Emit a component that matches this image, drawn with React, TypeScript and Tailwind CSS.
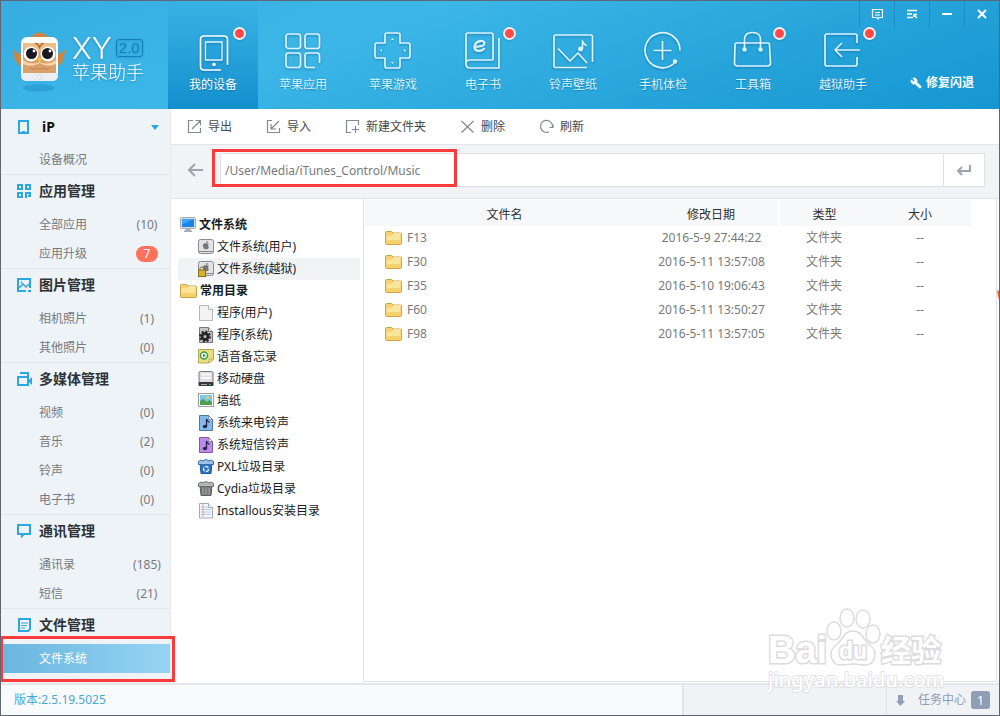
import React from "react";
import { Wrench } from "lucide-react";

type IconProps = { children: React.ReactNode };

function NavSvg({ children }: IconProps) {
  return (
    <svg viewBox="0 0 42 42" className="h-[42px] w-[42px] drop-shadow-[0_1px_1px_rgba(0,70,120,0.45)]" fill="none" stroke="#dcf4ff" strokeWidth="1.7" strokeLinecap="butt" strokeLinejoin="round" aria-hidden="true">
      {children}
    </svg>
  );
}

const navItems = [
  {
    label: "我的设备",
    active: true,
    dot: true,
    icon: (
      <NavSvg>
        <path d="M29 40H12q-3.500 0-3.500-3.500V9.500Q8.500 6 12 6h20q3.500 0 3.500 3.500V35" stroke="#fff" />
        <rect x="13.500" y="12" width="16.500" height="18" stroke="#e4f6ff" strokeWidth="1.300" />
        <circle cx="22" cy="34.500" r="1.800" fill="#fff" stroke="none" />
      </NavSvg>
    ),
  },
  {
    label: "苹果应用",
    icon: (
      <NavSvg>
        <rect x="4" y="4" width="14.500" height="14.500" rx="2.500" />
        <rect x="23" y="4" width="14.500" height="14.500" rx="2.500" />
        <rect x="4" y="23" width="14.500" height="14.500" rx="2.500" />
        <path d="M33 37.500h-7.500q-2.500 0-2.500-2.500v-9.500q0-2.500 2.500-2.500H35q2.500 0 2.500 2.500V33" />
      </NavSvg>
    ),
  },
  {
    label: "苹果游戏",
    icon: (
      <NavSvg>
        <path d="M15 3h11q2 0 2 2v8h8q2 0 2 2v11q0 2-2 2h-8v8q0 2-2 2H15q-2 0-2-2v-8H5q-2 0-2-2V15q0-2 2-2h8V5q0-2 2-2Z" />
        <path d="m20.500 8 1.500 2h-3ZM20.500 34l1.500-2h-3ZM8 20.500l2-1.500v3ZM34 20.500 32 19v3Z" fill="#dcf4ff" stroke="none" />
      </NavSvg>
    ),
  },
  {
    label: "电子书",
    dot: true,
    icon: (
      <NavSvg>
        <path d="M31 30V5q0-2-2-2H6Q4 3 4 5v29q0 4 4 4h29V8M4 34q0-4 4-4h23" />
        <path d="M12.500 17q10-.5 10-3.500c0-4.500-9-3-10 3-.5 5 7 6 10 1.500" strokeWidth="2.200" />
      </NavSvg>
    ),
  },
  {
    label: "铃声壁纸",
    icon: (
      <NavSvg>
        <path d="M35 37.500H3.500q-1.500 0-1.500-1.500V7q0-2 2-2h35q1.500 0 1.500 2v25" />
        <path d="m6 18.500 12 12.500 8-8 9 10" />
        <circle cx="28.500" cy="19" r="2.500" fill="#dcf4ff" stroke="none" />
        <path d="M30.500 19v-8q1 3 4 5" />
      </NavSvg>
    ),
  },
  {
    label: "手机体检",
    icon: (
      <NavSvg>
        <path d="M38 20.500A17.500 17.500 0 1 0 33 32.500" />
        <path d="M20.500 11v19M11.500 20.500h18" />
        <circle cx="33" cy="31.500" r="2.200" fill="#dcf4ff" stroke="none" />
      </NavSvg>
    ),
  },
  {
    label: "工具箱",
    dot: true,
    icon: (
      <NavSvg>
        <path d="M5 13h31q1.500 0 1.500 2l1 18q0 3-3 3h-30q-3 0-3-3l.5-18q0-2 2-2Z" />
        <path d="M12.500 19v-9.500q0-7 8-7t8 7V19" />
        <circle cx="12.500" cy="19.500" r="2.200" fill="#dcf4ff" stroke="none" />
        <circle cx="28.500" cy="19.500" r="2.200" fill="#dcf4ff" stroke="none" />
      </NavSvg>
    ),
  },
  {
    label: "越狱助手",
    dot: true,
    icon: (
      <NavSvg>
        <path d="M35 13V5.500Q35 4 33 4H5Q3 4 3 6v28q0 2 2 2h28q2 0 2-2v-7" />
        <path d="M38 20H13M20 13l-7 7 7 7" />
      </NavSvg>
    ),
  },
];

function SideIcon({ children }: IconProps) {
  return (
    <svg viewBox="0 0 16 16" className="h-4 w-4 shrink-0" fill="none" stroke="#2ba6de" strokeWidth="2" aria-hidden="true">
      {children}
    </svg>
  );
}

type SideItem = { label: string; count?: string; badge?: boolean; active?: boolean };

const sections: { title: string; icon: React.ReactNode; items: SideItem[] }[] = [
  {
    title: "应用管理",
    icon: (
      <SideIcon>
        <path d="M2 2h4v4H2ZM10 2h4v4h-4ZM2 10h4v4H2ZM10 15v-5h4v3h-2" />
      </SideIcon>
    ),
    items: [{ label: "全部应用", count: "(10)" }, { label: "应用升级", count: "7", badge: true }],
  },
  {
    title: "图片管理",
    icon: (
      <SideIcon>
        <path d="M10 14H2V2h12v9M12 14h3" />
        <path d="m3 11 4-4 3 3 3-3" strokeWidth="1.500" />
        <circle cx="5.500" cy="5.500" r="1" fill="#2ba6de" stroke="none" />
      </SideIcon>
    ),
    items: [{ label: "相机照片", count: "(1)" }, { label: "其他照片", count: "(0)" }],
  },
  {
    title: "多媒体管理",
    icon: (
      <SideIcon>
        <path d="M2 6h10v8H2ZM4 2h8v4" />
        <path d="m12 10 4-4v8Z" fill="#2ba6de" stroke="none" />
      </SideIcon>
    ),
    items: [
      { label: "视频", count: "(0)" },
      { label: "音乐", count: "(2)" },
      { label: "铃声", count: "(0)" },
      { label: "电子书", count: "(0)" },
    ],
  },
  {
    title: "通讯管理",
    icon: (
      <SideIcon>
        <path d="M2 2h12v9H8l-2 2v-2H2Z" />
      </SideIcon>
    ),
    items: [{ label: "通讯录", count: "(185)" }, { label: "短信", count: "(21)" }],
  },
  {
    title: "文件管理",
    icon: (
      <SideIcon>
        <path d="M14 12V2H3v12h9Z" />
        <path d="M5 6h7M5 8.500h6M5 11h4" strokeWidth="1.200" />
      </SideIcon>
    ),
    items: [{ label: "文件系统", active: true }],
  },
];

function SideRow({ item }: { item: SideItem }) {
  return (
    <li className="relative">
      <button
        className={
          item.active
            ? "flex h-[29px] w-full items-center bg-gradient-to-r from-[#68b6df] to-[#97d4f3] pl-[38px] text-white"
            : "flex h-[29px] w-full items-center justify-between pl-[38px]"
        }
      >
        <span>{item.label}</span>
        {item.count && (
          <span className="flex w-[46px] justify-center">
            {item.badge ? (
              <span className="h-4 w-[22px] rounded-full bg-[#ff715c] leading-4 text-white">{item.count}</span>
            ) : (
              item.count
            )}
          </span>
        )}
      </button>
      {item.active && (
        <span className="pointer-events-none absolute -top-2 -right-[5px] -bottom-[9px] -left-px z-10 border-3 border-[#fb3a3b]" />
      )}
    </li>
  );
}

function ToolSvg({ children }: IconProps) {
  return (
    <svg viewBox="0 0 15 15" className="h-[15px] w-[15px]" fill="none" stroke="#85888e" strokeWidth="1.200" aria-hidden="true">
      {children}
    </svg>
  );
}

const tools = [
  { label: "导出", icon: <ToolSvg><path d="M6 1.500H1.500v12h12V9M5 10l8-8M8.500 1.500h5v5" /></ToolSvg> },
  { label: "导入", icon: <ToolSvg><path d="M6 1.500H1.500v12h12V9M13 2l-8 8M5 5v5h5" /></ToolSvg> },
  { label: "新建文件夹", icon: <ToolSvg><path d="M6 13.500H1.500v-12h12V6M10.500 7v7M7 10.500h7" /></ToolSvg> },
  { label: "删除", icon: <ToolSvg><path d="m1.500 2 12 11.500M13.500 2l-12 11.500" /></ToolSvg> },
  { label: "刷新", icon: <ToolSvg><path d="M10 12.800A6 6 0 1 1 13.500 7.500V9M10.500 8.500h3.500V5.500" /></ToolSvg> },
];

function TreeSvg({ children }: IconProps) {
  return (
    <svg viewBox="0 0 16 16" className="h-4 w-4 shrink-0" aria-hidden="true">
      {children}
    </svg>
  );
}

function Folder() {
  return (
    <svg viewBox="0 0 17 15" className="h-[15px] w-[17px] shrink-0" aria-hidden="true">
      <path d="M.5 12.500v-11q0-1 1-1h5l1.500 1.500h7.500q1 0 1 1v9.500q0 1-1 1h-14q-1 0-1-1Z" fill="#f6d26f" stroke="#cda24a" />
      <path d="M1.500 4.500h6L9 3h6.500v6h-14Z" fill="#fbe596" />
      <path d="M8 2.500h7.500v1H9Z" fill="#fff6cf" />
    </svg>
  );
}

const disk = (
  <>
    <rect x=".5" y=".5" width="15" height="14" rx="2" fill="#e3e2e6" stroke="#8a8a90" />
    <path d="M1 12.500h14" stroke="#88888c" />
    <path d="M8 4.500c-2-1-3.500.5-3 3 .5 2 1.500 3.500 3 2.500 1.500 1 2.500-.5 3-2-1.500-.8-1.300-2.300 0-3-1-1.200-2-.8-3-.5Zm0-.5q0-2 2-2 0 2-2 2Z" fill="#737378" />
  </>
);

const note = (fill: string, stroke: string) => (
  <TreeSvg>
    <path d="M1.500.5h9l4 4v11h-13Z" fill={fill} stroke={stroke} />
    <path d="M10.500.5v4h4Z" fill="#fff" stroke={stroke} strokeWidth=".7" />
    <path d="M8.500 11V4q.5 2 3 3.500" fill="none" stroke="#202a40" strokeWidth="1.300" />
    <ellipse cx="7" cy="11.500" rx="2.200" ry="1.700" fill="#202a40" />
  </TreeSvg>
);

type TreeNode = { label: string; root?: boolean; selected?: boolean; icon: React.ReactNode };

const tree: TreeNode[] = [
  {
    label: "文件系统",
    root: true,
    icon: (
      <TreeSvg>
        <rect x=".5" y=".5" width="15" height="11" rx="1" fill="#d6dade" stroke="#a5abb1" />
        <rect x="2" y="2" width="12" height="8" fill="#1786e8" />
        <path d="M2 2h12L2 7.500Z" fill="#3fa3f5" />
        <path d="M6 12h4l1 1.500h1V15H4v-1.500h1Z" fill="#a8adb3" />
      </TreeSvg>
    ),
  },
  { label: "文件系统(用户)", icon: <TreeSvg>{disk}</TreeSvg> },
  {
    label: "文件系统(越狱)",
    selected: true,
    icon: (
      <TreeSvg>
        {disk}
        <path d="M2 9V7.500q0-1.500 2-1.500t2 1.500V9" fill="none" stroke="#7c6a1d" />
        <rect x=".5" y="9" width="7" height="6.500" fill="#d5b22e" stroke="#826e19" />
      </TreeSvg>
    ),
  },
  { label: "常用目录", root: true, icon: <Folder /> },
  {
    label: "程序(用户)",
    icon: (
      <TreeSvg>
        <path d="M1.500.5h9l4 4v11h-13Z" fill="#f3f3f5" stroke="#b5b5ba" />
        <path d="M10.500.5v4h4" fill="#fff" stroke="#b5b5ba" />
      </TreeSvg>
    ),
  },
  {
    label: "程序(系统)",
    icon: (
      <TreeSvg>
        <path d="M1.500.5h9l4 4v11h-13Z" fill="#c6c6c9" stroke="#77777b" />
        <path d="M10.500.5v4h4" fill="#eee" stroke="#77777b" />
        <circle cx="7" cy="9.500" r="3" fill="none" stroke="#29292c" strokeWidth="3" />
        <circle cx="7" cy="9.500" r="5" fill="none" stroke="#29292c" strokeWidth="2" strokeDasharray="2 1.900" />
      </TreeSvg>
    ),
  },
  {
    label: "语音备忘录",
    icon: (
      <TreeSvg>
        <path d="M.5.5h15v9.500l-4.500 4H.5Z" fill="#e9df82" stroke="#b7a755" />
        <path d="M11 14v-4h4.500Z" fill="#fbf5b8" stroke="#b7a755" />
        <circle cx="6" cy="6.500" r="3.500" fill="#fff" stroke="#3f9f43" strokeWidth="1.500" />
        <path d="m5 4.500 3 2-3 2Z" fill="#3f9f43" />
      </TreeSvg>
    ),
  },
  {
    label: "移动硬盘",
    icon: (
      <TreeSvg>
        <rect x="1" y=".5" width="14" height="12" rx="1.500" fill="#dedee1" stroke="#77777b" />
        <path d="M3 3.500h10M3 7h10" stroke="#f8f8f8" strokeWidth="2" />
        <rect x=".5" y="11" width="15" height="4" rx="1" fill="#38383c" />
        <path d="M3 13.500h6" stroke="#aaa" />
        <path d="M11 13.500h2" stroke="#38c64b" />
      </TreeSvg>
    ),
  },
  {
    label: "墙纸",
    icon: (
      <TreeSvg>
        <rect x=".5" y=".5" width="15" height="13" fill="#fff" stroke="#9b9ea2" />
        <rect x="2" y="2" width="12" height="10" fill="#7ac7ed" />
        <path d="M2 12V8l3-2 4 3 2-2 3 2v3Z" fill="#49a14c" />
        <circle cx="9.500" cy="4.500" r="1.500" fill="#f5cf43" />
      </TreeSvg>
    ),
  },
  { label: "系统来电铃声", icon: note("#86b9ee", "#54799f") },
  { label: "系统短信铃声", icon: note("#bd89ec", "#80599f") },
  {
    label: "PXL垃圾目录",
    icon: (
      <TreeSvg>
        <path d="M2 4h12l-1 10.500H3Z" fill="#2e73c0" stroke="#1d5498" />
        <path d="M.5 2.500 3 1l2 1 3-1.500L11 2l2-1 2.500 1.500v3H.5Z" fill="#9fc2e8" stroke="#376da8" />
        <circle cx="8" cy="10" r="2.500" fill="none" stroke="#e3f1ff" strokeWidth="1.300" strokeDasharray="4 1.200" />
      </TreeSvg>
    ),
  },
  {
    label: "Cydia垃圾目录",
    icon: (
      <TreeSvg>
        <path d="M2 4h12l-1 10.500H3Z" fill="#77787b" stroke="#5c5d60" />
        <path d="M.5 2.500 3 1l2 1 3-1.500L11 2l2-1 2.500 1.500v3H.5Z" fill="#b5b6b9" stroke="#6d6e71" />
        <path d="M5 7v7M8 7v7M11 7v7" stroke="#a4a5a7" />
      </TreeSvg>
    ),
  },
  {
    label: "Installous安装目录",
    icon: (
      <TreeSvg>
        <path d="M1.500.5h9l4 4v10.500h-13Z" fill="#f5f9fe" stroke="#9eabb9" />
        <path d="M3 4h7M3 6.500h10M3 9h10M3 11.500h10" stroke="#9dbfe5" strokeWidth=".8" />
        <path d="M5 1v13" stroke="#e79a9a" />
        <path d="M10.500.5v4h4" fill="#fff" stroke="#9eabb9" />
      </TreeSvg>
    ),
  },
];

const files = [
  ["F13", "2016-5-9 27:44:22"],
  ["F30", "2016-5-11 13:57:08"],
  ["F35", "2016-5-10 19:06:43"],
  ["F60", "2016-5-11 13:50:27"],
  ["F98", "2016-5-11 13:57:05"],
];

function Owl() {
  return (
    <svg viewBox="0 0 54 64" className="h-16 w-[54px] shrink-0" aria-hidden="true">
      <ellipse cx="26" cy="57" rx="16" ry="3.500" fill="#1681bf" opacity=".35" />
      <path d="M18 8q-3-3 2-3-1-3 3-2 3-4 6 0 4-2 4 2 4 0 3 3Z" fill="#c98644" />
      <path d="M9 22Q4 24 1 18q-2 5 1 7-2 1 0 4 0 2 2 2-1 3 5 4ZM43 22q5 2 9-4 1 5-2 7 2 1 0 4 0 2-2 2 1 3-5 4Z" fill="#c98644" />
      <rect x="8" y="6" width="37" height="44" rx="6" fill="#fbfcfe" />
      <path d="M8 42h37v2q0 6-6 6H14q-6 0-6-6Z" fill="#eaeff5" />
      <rect x="10" y="12" width="33" height="30" fill="#d9a06a" />
      <path d="M10 12h33v6L26.500 21 10 18Z" fill="#edbd86" />
      <path d="M22 12l4.500 3 4.500-3M24 12l2.500 5 2.500-5" fill="none" stroke="#a97341" strokeWidth="1.200" />
      <path d="M10 29q8 6 16.500 2 8.500 4 16.500-2v4q-8 4-16.500-1-8.500 5-16.500 1Z" fill="#f8d5ac" />
      <path d="M17 37q3 3 6 0 3.500 3 7 0 3 3 6 0" stroke="#bd8250" fill="none" />
      <circle cx="18" cy="23" r="7.500" fill="#fff" />
      <circle cx="35" cy="23" r="7.500" fill="#fff" />
      <circle cx="18.500" cy="22.500" r="5.500" fill="#1b1722" />
      <circle cx="34.500" cy="22.500" r="5.500" fill="#1b1722" />
      <circle cx="21" cy="20" r="1.400" fill="#fff" />
      <circle cx="37" cy="20" r="1.400" fill="#fff" />
      <path d="M24.500 27h4.500l-2.300 5.500Z" fill="#f7c92e" />
      <circle cx="26.500" cy="46" r="2" fill="#fff" stroke="#ced5df" />
    </svg>
  );
}

function WindowButton({ label, children }: { label: string; children: React.ReactNode }) {
  return (
    <button aria-label={label} className="flex h-[26px] w-[35px] items-center justify-center border-l border-[#1780b8]/60">
      <svg viewBox="0 0 12 12" className="h-3 w-3" fill="none" stroke="#fff" strokeWidth="1.500" aria-hidden="true">
        {children}
      </svg>
    </button>
  );
}

export default function App() {
  return (
    <div className="relative flex min-h-screen flex-col overflow-hidden border border-[#5f6573] bg-white font-['Noto_Sans','Noto_Sans_CJK_SC',sans-serif] text-[12px] leading-4 text-[#77797e]">
      <header className="relative flex h-[108px] bg-[linear-gradient(160deg,#37ade2_0%,#3cb6e7_35%,#2ba8dd_62%,#1596d2_100%)] text-white">
        <div className="flex w-[167px] shrink-0 items-start gap-1 pt-[30px] pl-3">
          <Owl />
          <div className="pl-[1px] pt-[3px] drop-shadow-[0_1px_1px_rgba(0,80,130,0.35)]">
            <div className="flex items-center gap-1">
              <span className="font-['Inter',sans-serif] text-[30px] leading-7 font-light">XY</span>
              <span className="rounded-[3px] border border-[#137fb7] px-[2px] font-['Liberation_Sans',sans-serif] text-[15px] leading-4 text-[#137fb7]">2.0</span>
            </div>
            <div className="text-[18px] leading-5 font-light whitespace-nowrap">苹果助手</div>
          </div>
        </div>
        <nav className="flex">
          {navItems.map((n) => (
            <button
              key={n.label}
              className={
                n.active
                  ? "relative flex w-[90px] flex-col items-center bg-gradient-to-b from-[#1591d0]/0 to-[#128fcd] pt-[29px] text-white"
                  : "relative flex w-[90px] flex-col items-center pt-[29px] text-[#d9f2fd]"
              }
            >
              {n.icon}
              <span className="mt-[5px] [text-shadow:0_1px_1px_rgba(0,70,120,0.4)]">{n.label}</span>
              {n.dot && <span className="absolute top-[26px] right-[12px] h-[13px] w-[13px] rounded-full border-2 border-[#f3eef2] bg-[#fe4a48] shadow-sm" />}
            </button>
          ))}
        </nav>
        <div className="flex flex-1 items-start justify-end pt-[74px] pr-[25px]">
          <button className="flex items-center gap-1 font-bold whitespace-nowrap">
            <Wrench size={12} fill="white" className="-scale-x-100" aria-hidden="true" />
            修复闪退
          </button>
        </div>
        <div className="absolute top-0 right-0 flex">
          <WindowButton label="反馈"><path d="M1.500 1.500h10v8H8l-1 1.500-1-1.500H1.500ZM4 4.500h5M4 7h5" strokeWidth="1.200" /></WindowButton>
          <WindowButton label="菜单"><path d="M1 2.500h10M1 6h5M1 9.500h6M11 10 8 7M8 9V6.500h3" /></WindowButton>
          <WindowButton label="最小化"><path d="M1 6h10" strokeWidth="2" /></WindowButton>
          <WindowButton label="关闭"><path d="m2 2 8 8M10 2l-8 8" strokeWidth="2" /></WindowButton>
        </div>
      </header>

      <div className="flex flex-1">
        <aside className="w-[169px] shrink-0 bg-[#eef3f7]">
          <button className="flex h-9 w-full items-center pr-[11px] pl-[14px] text-[14px] font-bold text-[#111]">
            <SideIcon><path d="M4 2h9v12H4Z" /><path d="M7 13h3" /></SideIcon>
            <span className="ml-[11px] flex-1 text-left">iP</span>
            <svg viewBox="0 0 8 5" className="h-[5px] w-2" aria-hidden="true"><path d="M0 0h8L4 5Z" fill="#2ba6de" /></svg>
          </button>
          <ul><SideRow item={{ label: "设备概况" }} /></ul>
          {sections.map((s) => (
            <section key={s.title} className="border-t border-[#e1e6ea]">
              <h2 className="flex h-[35px] items-center gap-[7px] pb-[3px] pl-[15px] text-[14px] font-bold text-[#2f3338]">
                {s.icon}
                {s.title}
              </h2>
              <ul>{s.items.map((i) => <SideRow key={i.label} item={i} />)}</ul>
            </section>
          ))}
        </aside>

        <main className="flex min-w-0 flex-1 flex-col border-l border-[#e7e9ed]">
          <div className="flex h-[35px] items-center gap-[34px] pl-4 text-[#45484d]">
            {tools.map((t) => (
              <button key={t.label} className="flex items-center gap-[6px]">
                {t.icon}
                {t.label}
              </button>
            ))}
          </div>
          <div className="flex h-[55px] items-center border-y border-[#e2e4e9] bg-[#f1f3f6] pr-[14px] pb-[3px] pl-4">
            <button aria-label="返回">
              <svg viewBox="0 0 16 14" className="h-[14px] w-4" fill="none" stroke="#9ba5b1" strokeWidth="2" aria-hidden="true"><path d="M16 7H2M8 1 2 7l6 6" /></svg>
            </button>
            <div className="relative ml-[17px] flex flex-1">
              <input
                aria-label="路径"
                defaultValue="/User/Media/iTunes_Control/Music"
                className="h-[34px] min-w-0 flex-1 border border-[#dfe1e6] bg-white px-1 text-[12px] text-[#77797e] outline-none"
              />
              <span className="pointer-events-none absolute -top-1 -left-2 h-[38px] w-[245px] border-3 border-[#fb3a3b]" />
            </div>
            <button aria-label="转到" className="flex h-[34px] w-[41px] items-center justify-center border border-l-0 border-[#dfe1e6] bg-white">
              <svg viewBox="0 0 16 12" className="h-3 w-4" fill="none" stroke="#9ba5b1" strokeWidth="2" aria-hidden="true"><path d="M14 1v6H2M6 3 2 7l4 4" /></svg>
            </button>
          </div>

          <div className="flex flex-1">
            <ul className="w-[192px] shrink-0 pt-[15px] pr-[3px] pl-[7px] text-[#191b1f]">
              {tree.map((n) => (
                <li key={n.label}>
                  <button
                    className={
                      n.root
                        ? "flex h-[22px] w-full items-center gap-[3px] pl-[2px] font-bold"
                        : n.selected
                          ? "flex h-[22px] w-full items-center gap-[3px] bg-[#f1f3f5] pl-5"
                          : "flex h-[22px] w-full items-center gap-[3px] pl-5"
                    }
                  >
                    {n.icon}
                    {n.label}
                  </button>
                </li>
              ))}
            </ul>

            <div className="relative mr-[2px] mb-px flex-1 border-x border-b border-[#e1e2e7] pt-px pr-[25px] pl-px">
              <table className="w-full table-fixed border-collapse">
                <thead>
                  <tr className="h-[26px] bg-[#f7f8fa] text-[#2c2f33]">
                    <th className="pt-1 font-normal">文件名</th>
                    <th className="w-[135px] border-r-2 border-white pt-1 font-normal">修改日期</th>
                    <th className="w-[90px] pt-1 font-normal">类型</th>
                    <th className="w-[102px] pt-1 font-normal">大小</th>
                  </tr>
                </thead>
                <tbody>
                  {files.map(([name, date]) => (
                    <tr key={name} className="h-6 text-center">
                      <td>
                        <span className="flex items-center gap-[5px] pl-5"><Folder />{name}</span>
                      </td>
                      <td className="whitespace-nowrap">{date}</td>
                      <td>文件夹</td>
                      <td>--</td>
                    </tr>
                  ))}
                </tbody>
              </table>
            </div>
          </div>
        </main>
      </div>

      <footer className="flex h-8 border-t-2 border-[#e5e6eb] bg-[#f0f2f6]">
        <div className="flex flex-1 items-center border-r-2 border-[#e3e5ea] bg-[#f9fafc] pl-[13px] text-[#4aa9d4]">版本:2.5.19.5025</div>
        <div className="w-[202px]" />
        <button className="flex w-[113px] items-center border-l border-[#e0e2e8] pl-[9px] text-[#8f9db4]">
          <svg viewBox="0 0 9 11" className="h-[11px] w-[9px]" aria-hidden="true"><path d="M2 0h5v6h2L4.500 11 0 6h2Z" fill="#8f9fb7" /></svg>
          <span className="ml-[13px]">任务中心</span>
          <span className="ml-[5px] h-[18px] w-[19px] rounded-[3px] bg-[#8f9eb5] text-[13px] leading-[18px] text-white">1</span>
        </button>
      </footer>

      <svg viewBox="0 0 180 86" className="pointer-events-none absolute right-[52px] bottom-[22px] h-[86px] w-[180px]" fill="#fff" stroke="#dcdcdf" strokeWidth="1.500" aria-hidden="true">
        <ellipse cx="67" cy="24" rx="7" ry="9" />
        <ellipse cx="80" cy="11" rx="7" ry="9" />
        <ellipse cx="96" cy="12" rx="7" ry="9" />
        <ellipse cx="106" cy="27" rx="7" ry="9" />
        <path d="M86 24c-9 0-10 9-17 14-9 7-5 20 5 20 5 0 7-1 12-1s7 1 12 1c10 0 14-13 5-20-7-5-8-14-17-14Z" />
        <g fontFamily="Liberation Sans, sans-serif" fontWeight="700" paintOrder="stroke" strokeWidth="3">
          <text x="1" y="56" fontSize="38">Bai</text>
          <text x="72" y="52" fontSize="23">du</text>
          <text x="114" y="54" fontSize="30" fontFamily="Noto Sans CJK SC, sans-serif">经验</text>
        </g>
        <text x="1" y="80" fontSize="20" fontFamily="Noto Sans, sans-serif" fontWeight="500" paintOrder="stroke" strokeWidth="2" strokeOpacity=".8">jingyan.baidu.com</text>
      </svg>
      <svg viewBox="0 0 3 12" className="absolute top-[289px] -right-px h-3 w-[3px]" aria-hidden="true"><path d="M0 1 3 0v12Q1 8 0 1Z" fill="#fb6636" /></svg>
    </div>
  );
}
